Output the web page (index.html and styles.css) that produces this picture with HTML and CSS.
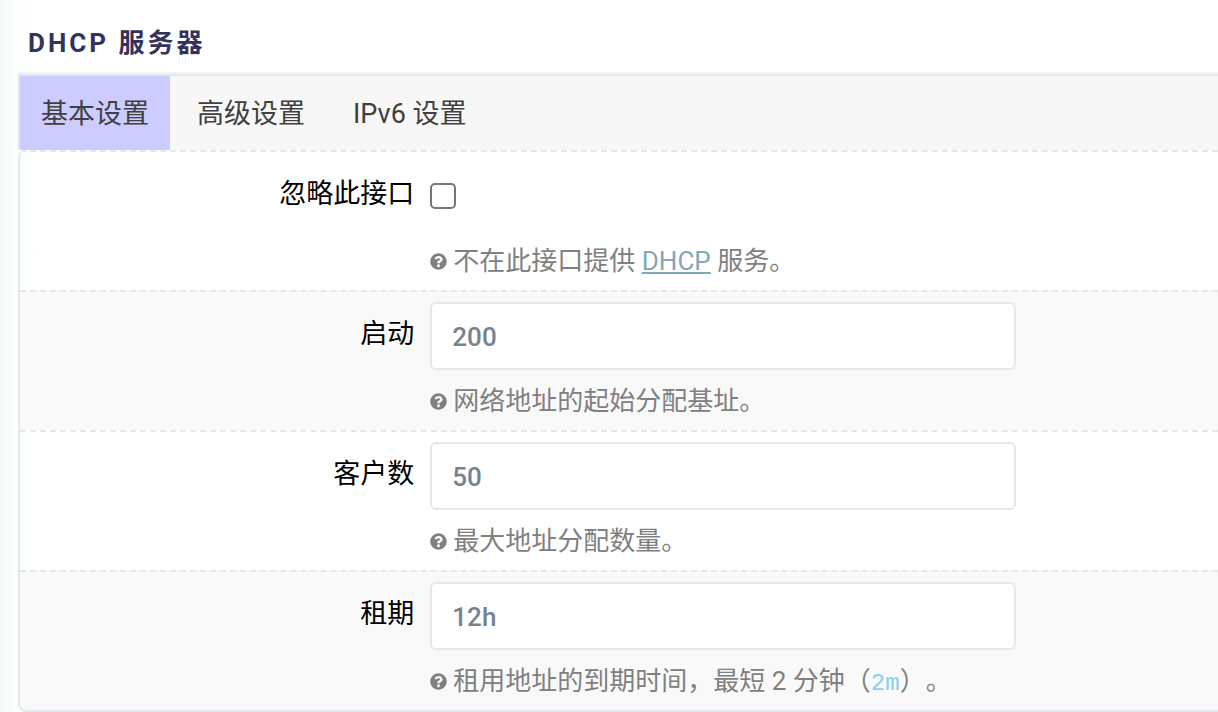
FILE: index.html
```html
<!DOCTYPE html>
<html lang="zh-CN">
<head>
  <meta charset="UTF-8">
  <meta name="viewport" content="width=device-width, initial-scale=1.0">
  <title>DHCP 服务器</title>
  <link rel="stylesheet" href="styles.css">
</head>
<body>
  <svg class="sprite" aria-hidden="true">
    <symbol id="icon-help" viewBox="0 0 512 512">
      <path fill="currentColor" d="M504 256c0 137-111 248-248 248S8 393 8 256 119 8 256 8s248 111 248 248zM262.700 90c-54.500 0-89.300 23-116.500 63.800-3.500 5.300-2.400 12.400 2.700 16.200l34.700 26.300c5.200 3.900 12.600 3 16.700-2.100 17.900-22.700 30.100-35.800 57.300-35.800 20.400 0 45.700 13.100 45.700 33 0 15-12.400 22.700-32.500 34C247.100 238.500 216 254.900 216 296v4c0 6.600 5.400 12 12 12h56c6.600 0 12-5.400 12-12v-1.300c0-28.500 83.200-29.600 83.200-106.700 0-58-60.200-102-116.500-102zM256 338c-25.400 0-46 20.600-46 46s20.600 46 46 46 46-20.600 46-46-20.600-46-46-46z"/>
    </symbol>
  </svg>

  <main class="section">
    <h3 class="section-title">DHCP 服务器</h3>

    <nav class="tabs">
      <a class="tab active" href="#general">基本设置</a>
      <a class="tab" href="#advanced">高级设置</a>
      <a class="tab" href="#ipv6">IPv6 设置</a>
    </nav>

    <form class="panel" id="general">
      <div class="row">
        <label class="row-label" for="ignore">忽略此接口</label>
        <div class="row-field">
          <div class="check-wrap">
            <input type="checkbox" id="ignore" class="checkbox">
          </div>
          <div class="help">
            <svg class="help-icon" aria-hidden="true"><use href="#icon-help"/></svg>
            <p>不在此接口提供 <a class="help-link" href="#dhcp">DHCP</a> 服务。</p>
          </div>
        </div>
      </div>

      <div class="row">
        <label class="row-label" for="start">启动</label>
        <div class="row-field">
          <input type="text" id="start" class="input-field" value="200">
          <div class="help">
            <svg class="help-icon" aria-hidden="true"><use href="#icon-help"/></svg>
            <p>网络地址的起始分配基址。</p>
          </div>
        </div>
      </div>

      <div class="row">
        <label class="row-label" for="limit">客户数</label>
        <div class="row-field">
          <input type="text" id="limit" class="input-field" value="50">
          <div class="help">
            <svg class="help-icon" aria-hidden="true"><use href="#icon-help"/></svg>
            <p>最大地址分配数量。</p>
          </div>
        </div>
      </div>

      <div class="row">
        <label class="row-label" for="leasetime">租期</label>
        <div class="row-field">
          <input type="text" id="leasetime" class="input-field" value="12h">
          <div class="help">
            <svg class="help-icon" aria-hidden="true"><use href="#icon-help"/></svg>
            <p>租用地址的到期时间，最短 2 分钟（<code>2m</code>）。</p>
          </div>
        </div>
      </div>
    </form>
  </main>
</body>
</html>
```

FILE: styles.css
```css
* {
  box-sizing: border-box;
  margin: 0;
  padding: 0;
}

body {
  font-family: Roboto, "Noto Sans CJK SC", sans-serif;
  font-size: 26px;
  color: #000;
  background: linear-gradient(to right, #f6f9fa, #fdfefe 18px, #fff 50px);
  text-spacing-trim: space-all;
}

.sprite {
  display: none;
}

.section {
  padding-left: 18px;
}

.section-title {
  padding: 23px 10px 11px;
  font-size: 26px;
  font-weight: 700;
  line-height: 40px;
  letter-spacing: 3px;
  color: #32325d;
}

/* Tabs */
.tabs {
  display: flex;
  gap: 6px;
  border-top: 2px solid #e3e8eb;
  border-left: 2px solid #e3e8eb;
  background-color: #f7f7f7;
  box-shadow: 0 -2px 0 #f1f2f2;
}

.tab {
  padding: 2px 21px 0;
  font-size: 27px;
  line-height: 72px;
  color: #404040;
  text-decoration: none;
}

.tab.active {
  background-color: #ccccff;
}

/* Form */
.panel {
  border-left: 2px solid #e3e8eb;
  border-bottom: 2px solid #e3e8eb;
  border-radius: 8px 0 0 8px;
  overflow: hidden;
}

.row {
  display: flex;
  gap: 15px;
  padding: 10px 0;
  border-top: 2px dashed #e3e8eb;
}

.row:nth-child(even) {
  background-color: #f9f9f9;
}

.row-label {
  width: 33%;
  padding-right: 1px;
  font-size: 27px;
  line-height: 64px;
  text-align: right;
}

.row-field {
  flex: 1;
}

.input-field {
  display: block;
  width: 586px;
  max-width: 100%;
  height: 68px;
  padding: 1px 20px 0;
  border: 2px solid #e3e8eb;
  border-radius: 6px;
  background-color: #fff;
  font-family: inherit;
  font-size: 26px;
  font-weight: 500;
  color: #76838f;
}

.input-field:focus {
  outline: none;
  border-color: #ccccff;
}

.check-wrap {
  display: flex;
  align-items: center;
  height: 68px;
}

.checkbox {
  appearance: none;
  width: 26px;
  height: 26px;
  border: 2px solid #767676;
  border-radius: 5px;
  background-color: #fff;
}

.checkbox:checked {
  background-color: #32325d;
}

.help {
  display: flex;
  align-items: center;
  gap: 6px;
  padding-top: 12px;
  line-height: 38px;
  color: #808080;
}

.help-icon {
  flex: none;
  width: 17px;
  height: 17px;
}

.help-link {
  color: #80a8b8;
}

.help code {
  font-family: "Liberation Mono", monospace;
  font-size: 24px;
  line-height: 1;
  color: #87ceeb;
}
```
